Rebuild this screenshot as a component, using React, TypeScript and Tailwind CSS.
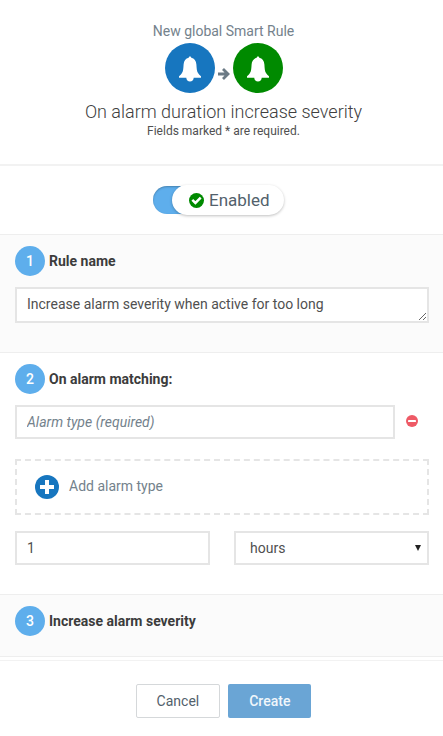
import { useState } from "react";
import type { ReactNode } from "react";

function BellIcon() {
  return (
    <svg viewBox="0 0 24 26" className="mt-0.5 h-[26px] w-6" fill="currentColor" aria-hidden="true">
      <path d="M12 0.500c.7 0 1.200.5 1.300 1.300 3 .7 4.900 3.300 5.100 6.600.2 3.600.4 6.500 1.600 8.700.7 1.300 1.800 2.300 3 3.200v1.500H15.700c0 2.200-1.600 3.700-3.700 3.700s-3.700-1.500-3.700-3.700H1v-1.500c1.200-.9 2.300-1.900 3-3.200 1.200-2.200 1.400-5.100 1.600-8.700C5.800 5.100 7.700 2.500 10.700 1.800c.1-.8.600-1.300 1.300-1.300z" />
    </svg>
  );
}

function ArrowIcon() {
  return (
    <svg viewBox="0 0 12 12" className="mt-[11px] h-3 w-3" fill="none" stroke="currentColor" strokeWidth="2.800" aria-hidden="true">
      <path d="M0 6h10M5 1l5 5-5 5" />
    </svg>
  );
}

function CheckCircleIcon() {
  return (
    <svg viewBox="0 0 15 15" className="h-[15px] w-[15px]" aria-hidden="true">
      <circle cx="7.500" cy="7.500" r="7.500" fill="#008a00" />
      <path d="M3.300 6.900l3.100 3.100 5.300-5.300" fill="none" stroke="#fff" strokeWidth="2.500" />
    </svg>
  );
}

function MinusCircleIcon() {
  return (
    <svg viewBox="0 0 12 12" className="h-3 w-3" aria-hidden="true">
      <circle cx="6" cy="6" r="6" fill="#ee5a66" />
      <rect x="2" y="5" width="8" height="2" rx="0.4" fill="#fff" />
    </svg>
  );
}

function PlusCircleIcon() {
  return (
    <svg viewBox="0 0 24 24" className="h-6 w-6" aria-hidden="true">
      <circle cx="12" cy="12" r="12" fill="#1776bf" />
      <path d="M12 5v14M5 12h14" stroke="#fff" strokeWidth="4" strokeLinecap="butt" />
    </svg>
  );
}

function StepHeading({ step, children }: { step: number; children: ReactNode }) {
  return (
    <h2 className="flex items-center gap-1 text-sm font-bold text-[#3c3c3c]">
      <span className="flex h-[30px] w-[30px] items-center justify-center rounded-full bg-[#5eaeec] font-medium text-white">
        {step}
      </span>
      {children}
    </h2>
  );
}

const field =
  "block h-[34px] w-full min-w-0 rounded-none border-2 border-[#e5e5e5] bg-white px-2.5 text-sm text-[#505050] outline-none focus:border-[#5eaeec]";

export default function App() {
  const [enabled, setEnabled] = useState(true);
  const [name, setName] = useState("Increase alarm severity when active for too long");
  const [type, setType] = useState("");
  const [duration, setDuration] = useState("1");
  const [unit, setUnit] = useState("hours");

  return (
    <form
      className="bg-white font-['Roboto','Liberation_Sans',sans-serif] text-sm text-[#505050]"
      onSubmit={(e) => e.preventDefault()}
    >
      <header className="flex flex-col items-center border-b-2 border-[#f2f2f2] pt-[21px] pr-3 pb-[23px] pl-4 text-center">
        <p className="text-[#74828c]">New global Smart Rule</p>
        <div className="mt-0.5 flex items-center gap-[3px]">
          <span className="flex h-[50px] w-[50px] items-center justify-center rounded-full bg-[#1776bf] text-white">
            <BellIcon />
          </span>
          <span className="text-[#6b7a85]">
            <ArrowIcon />
          </span>
          <span className="flex h-[50px] w-[50px] items-center justify-center rounded-full bg-[#008a00] text-white">
            <BellIcon />
          </span>
        </div>
        <h1 className="mt-[9px] text-lg leading-5 font-light text-[#404040]">On alarm duration increase severity</h1>
        <p className="text-xs leading-[19px]">Fields marked * are required.</p>
      </header>

      <div className="flex justify-center py-[19px] pr-1.5">
        <label className="flex cursor-pointer items-center text-[17px] leading-6 text-[#52616c]">
          <input
            type="checkbox"
            className="sr-only"
            checked={enabled}
            onChange={(e) => setEnabled(e.target.checked)}
          />
          <span className="h-7 w-10 rounded-l-full bg-[#5eaeec] shadow-[inset_0_1px_2px_rgba(0,0,0,0.25)]" />
          <span className="-ml-[21px] flex h-[30px] min-w-28 items-center gap-[5px] rounded-full bg-white pr-3.5 pl-[17px] shadow-[0_1px_3px_rgba(0,0,0,0.25)]">
            <CheckCircleIcon />
            {enabled ? "Enabled" : "Disabled"}
          </span>
        </label>
      </div>

      <section className="border-y border-[#eee] bg-[#fbfbfb] pt-[11px] pr-3.5 pb-[29px] pl-[15px]">
        <label htmlFor="rule-name">
          <StepHeading step={1}>Rule name</StepHeading>
        </label>
        <textarea
          id="rule-name"
          rows={1}
          className="mt-[11px] block h-9 w-full resize-y overflow-hidden rounded-none border-2 border-[#e5e5e5] bg-white px-2.5 py-[5px] text-sm text-[#505050] outline-none focus:border-[#5eaeec]"
          value={name}
          onChange={(e) => setName(e.target.value)}
        />
      </section>

      <section className="pt-[11px] pr-3.5 pb-[29px] pl-[15px]">
        <StepHeading step={2}>On alarm matching:</StepHeading>
        <div className="mt-[11px] flex items-center">
          <input
            type="text"
            aria-label="Alarm type"
            placeholder="Alarm type (required)"
            className={`${field} flex-1 placeholder:text-[#74828c] placeholder:italic`}
            value={type}
            onChange={(e) => setType(e.target.value)}
          />
          <button type="button" aria-label="Remove alarm type" className="flex w-[34px] justify-center pb-0.5">
            <MinusCircleIcon />
          </button>
        </div>
        <button
          type="button"
          className="mt-5 flex h-14 w-full items-center gap-2.5 border-2 border-dashed border-[#e5e5e5] px-[18px] text-[#74828c]"
        >
          <PlusCircleIcon />
          <span className="pb-0.5">Add alarm type</span>
        </button>
        <div className="mt-4 grid grid-cols-2 gap-6">
          <input
            type="text"
            aria-label="Duration"
            className={field}
            value={duration}
            onChange={(e) => setDuration(e.target.value)}
          />
          <div className="relative">
            <select
              aria-label="Duration unit"
              className={`${field} appearance-none pl-3.5`}
              value={unit}
              onChange={(e) => setUnit(e.target.value)}
            >
              <option>seconds</option>
              <option>minutes</option>
              <option>hours</option>
            </select>
            <svg viewBox="0 0 6 6" className="pointer-events-none absolute top-3.5 right-2 h-1.5 w-1.5" aria-hidden="true">
              <path d="M0 0h6L3 6z" fill="#222" />
            </svg>
          </div>
        </div>
      </section>

      <section className="border-y border-[#eee] bg-[#fbfbfb] pt-[11px] pr-3.5 pb-5 pl-[15px]">
        <StepHeading step={3}>Increase alarm severity</StepHeading>
      </section>

      <footer className="mt-[3px] flex justify-center gap-2 border-t border-[#f2f2f2] pt-[23px] pr-3 pb-[18px] pl-4">
        <button type="button" className="h-[34px] rounded-xs border border-[#d5d8da] px-5 text-[#52616c]">
          Cancel
        </button>
        <button type="submit" className="h-[34px] rounded-xs bg-[#6aa5d5] px-[21px] font-medium text-[#f0f6fb]">
          Create
        </button>
      </footer>
    </form>
  );
}
